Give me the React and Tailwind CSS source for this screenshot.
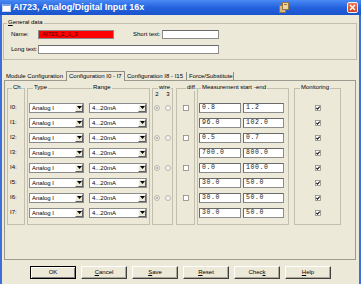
import React from "react";

const SANS = "font-['Liberation_Sans',Arial,sans-serif]";
const MONO = "font-['Liberation_Mono','Courier_New',monospace]";

const rows = [
  { ch: "I0:", s: "0.8", e: "1.2", pair: true },
  { ch: "I1:", s: "96.0", e: "102.0" },
  { ch: "I2:", s: "0.5", e: "0.7", pair: true },
  { ch: "I3:", s: "700.0", e: "800.0" },
  { ch: "I4:", s: "0.0", e: "100.0", pair: true },
  { ch: "I5:", s: "30.0", e: "50.0" },
  { ch: "I6:", s: "30.0", e: "50.0", pair: true },
  { ch: "I7:", s: "30.0", e: "50.0" },
];

function Group({ className, labels, children }) {
  return (
    <div className={`relative h-[137px] border border-[#c2bfae] ${className}`}>
      {labels.map(([t, pos]) => (
        <span
          key={t}
          className={`absolute top-[-5px] bg-[#ece9d8] px-[1px] text-[6px] leading-[7px] text-black ${pos}`}
        >
          {t}
        </span>
      ))}
      {children}
    </div>
  );
}

function Combo({ text, w }) {
  return (
    <div className={`flex h-[10px] items-stretch border border-[#8c8c8c] bg-white ${w}`}>
      <span className="flex-1 overflow-hidden pl-[2px] text-[6px] leading-[8px] whitespace-nowrap text-black">
        {text}
      </span>
      <span className="flex w-[8px] items-center justify-center border border-t-white border-l-white border-r-[#606060] border-b-[#606060] bg-[#ece9d8]">
        <svg width="5" height="3" viewBox="0 0 5 3">
          <path d="M0 0H5L2.5 3Z" fill="#000" />
        </svg>
      </span>
    </div>
  );
}

function Radio({ checked }) {
  return (
    <svg width="6" height="6" viewBox="0 0 6 6">
      <circle cx="3" cy="3" r="2.5" fill="#f4f3ee" stroke="#a8a8a0" strokeWidth="0.8" />
      {checked && <circle cx="3" cy="3" r="1.1" fill="#a8a8a0" />}
    </svg>
  );
}

function Check({ checked }) {
  return (
    <svg width="6" height="6" viewBox="0 0 6 6">
      <rect x="0.5" y="0.5" width="5" height="5" fill="#fff" stroke="#8a8a80" strokeWidth="0.8" />
      {checked && (
        <path d="M1.3 2.9L2.5 4.2L4.7 1.6" fill="none" stroke="#1a1a1a" strokeWidth="1.1" />
      )}
    </svg>
  );
}

function Field({ w, className = "", children }) {
  return (
    <div
      className={`h-[10px] border border-[#8c8c8c] border-t-[#6a6a6a] border-l-[#6a6a6a] bg-white pl-[2px] text-[6.5px] leading-[8px] tracking-[0.6px] text-[#222] ${MONO} ${w} ${className}`}
    >
      {children}
    </div>
  );
}

function Btn({ children, primary, className = "" }) {
  const base =
    "flex h-[13px] w-[46px] items-center justify-center bg-[#ece9d8] text-[6px] leading-[7px] text-black";
  const edge = primary
    ? "border border-black shadow-[inset_1px_1px_0_#fff,inset_-1px_-1px_0_#808080]"
    : "border border-t-white border-l-white border-r-[#404040] border-b-[#404040] shadow-[inset_-1px_-1px_0_#aca899]";
  return <div className={`${base} ${edge} ${className}`}>{children}</div>;
}

export default function App() {
  return (
    <div className={`h-[284px] w-[361px] overflow-hidden bg-[#ece9d8] ${SANS}`}>
      {/* Title bar */}
      <div className="flex h-[15px] items-center bg-gradient-to-b from-[#4a8af4] via-[#2462de] to-[#1a54cc] pl-[2px] pr-[3px]">
        <div className="h-[8px] w-[9px] border border-[#c8d4ec] border-t-[2px] border-t-[#7fa2e6] bg-white" />
        <span className="ml-[2px] text-[9px] font-bold leading-[15px] text-white">
          AI723, Analog/Digital Input 16x
        </span>
        <svg className="ml-auto" width="11" height="13" viewBox="0 0 11 13">
          <rect x="0.5" y="4.5" width="6" height="7" fill="#d9b77e" stroke="#9c7640" />
          <rect x="3.5" y="1.5" width="6" height="7" fill="#ecd3a2" stroke="#9c7640" />
          <rect x="5" y="3" width="3" height="1" fill="#9c7640" />
        </svg>
        <div className="ml-[57px] flex h-[11px] w-[11px] items-center justify-center rounded-[2px] border border-[#f2f2f2] bg-gradient-to-b from-[#ef7a57] to-[#d2401c]">
          <svg width="7" height="7" viewBox="0 0 7 7">
            <path d="M1 1L6 6M6 1L1 6" stroke="#fff" strokeWidth="1.4" />
          </svg>
        </div>
      </div>

      {/* Body */}
      <div className="flex h-[269px] flex-col border-l-[2px] border-r-[2px] border-[#3c6fdc]">
        {/* General data */}
        <div className="relative mt-[8px] ml-[1px] mr-[2px] border border-[#c2bfae] pt-[6px] pb-[5px] pl-[7px]">
          <span className="absolute top-[-5px] left-[3px] bg-[#ece9d8] px-[1px] text-[6px] leading-[7px] text-black">
            <span className="underline">G</span>eneral data
          </span>
          <div className="flex h-[9px] items-center">
            <span className="w-[27px] text-[6px] leading-[7px] text-black">Name:</span>
            <div className="flex h-[9px] w-[76px] items-center border border-[#8c8c8c] bg-[#ff0000] pl-[3px] text-[6px] leading-[7px] text-[#3a0000]">
              AI723_2_1_3
            </div>
            <span className="ml-[19px] w-[29px] text-[6px] leading-[7px] text-black">Short text:</span>
            <div className="h-[9px] w-[57px] border border-[#8c8c8c] border-t-[#6a6a6a] bg-white" />
          </div>
          <div className="mt-[6px] flex h-[9px] items-center">
            <span className="w-[27px] text-[6px] leading-[7px] text-black">Long text:</span>
            <div className="h-[9px] w-[181px] border border-[#8c8c8c] border-t-[#6a6a6a] bg-white" />
          </div>
        </div>

        {/* Tabs */}
        <div className="relative z-10 mt-[11px] ml-[2px] flex h-[9px] items-end text-[6px] leading-[8px] text-black">
          <div className="h-[8px] w-[61px] pl-[2px]">Module Configuration</div>
          <div className="ml-[1px] h-[10px] w-[59px] -mb-[1px] border border-b-0 border-[#8e8e84] bg-[#ece9d8] pl-[2px] leading-[9px]">
            Configuration I0 - I7
          </div>
          <div className="h-[8px] w-[62px] border-r border-[#8e8e84] pl-[2px]">Configuration I8 - I15</div>
          <div className="h-[8px] w-[47px] border-r border-[#8e8e84] pl-[2px]">Force/Substitute</div>
        </div>

        {/* Panel */}
        <div className="ml-[2px] mr-[3px] flex h-[180px] items-start border border-[#9a9a8e] pt-[7px]">
          {/* Ch. */}
          <Group className="ml-[2px] w-[18px] pt-[11px] pl-[2px]" labels={[["Ch.", "left-[4px]"]]}>
            {rows.map((r) => (
              <div key={r.ch} className="flex h-[15px] items-center text-[6px] leading-[7px] text-black">
                {r.ch}
              </div>
            ))}
          </Group>

          {/* Type / Range */}
          <Group
            className="ml-[2px] w-[123px] pt-[11px] pl-[1px]"
            labels={[
              ["Type", "left-[5px]"],
              ["Range", "left-[64px]"],
            ]}
          >
            {rows.map((r) => (
              <div key={r.ch} className="flex h-[15px] items-center gap-[5px]">
                <Combo text="Analog I" w="w-[55px]" />
                <Combo text="4...20mA" w="w-[58px]" />
              </div>
            ))}
          </Group>

          {/* wire */}
          <Group className="ml-[2px] w-[21px]" labels={[["wire", "left-[5px]"]]}>
            <div className="flex h-[11px] justify-center gap-[5px] pt-[2px] text-[6px] leading-[7px] text-black">
              <span className="w-[6px] text-center">2</span>
              <span className="w-[6px] text-center">3</span>
            </div>
            {rows.map((r) => (
              <div key={r.ch} className="flex h-[15px] items-center justify-center gap-[5px]">
                {r.pair && (
                  <>
                    <Radio checked />
                    <Radio />
                  </>
                )}
              </div>
            ))}
          </Group>

          {/* diff */}
          <Group className="ml-[3px] w-[19px] pt-[11px]" labels={[["diff.", "left-[9px]"]]}>
            {rows.map((r) => (
              <div key={r.ch} className="flex h-[15px] items-center justify-center">
                {r.pair && <Check />}
              </div>
            ))}
          </Group>

          {/* Measurement */}
          <Group
            className="ml-[2px] w-[92px] pt-[11px] pl-[1px]"
            labels={[
              ["Measurement start", "left-[3px]"],
              ["-end", "left-[55px]"],
            ]}
          >
            {rows.map((r) => (
              <div key={r.ch} className="flex h-[15px] items-center gap-[2px]">
                <Field w="w-[42px]">{r.s}</Field>
                <Field w="w-[41px]">{r.e}</Field>
              </div>
            ))}
          </Group>

          {/* Monitoring */}
          <Group className="ml-[5px] w-[47px] pt-[11px]" labels={[["Monitoring", "left-[5px]"]]}>
            {rows.map((r) => (
              <div key={r.ch} className="flex h-[15px] items-center justify-center">
                <Check checked />
              </div>
            ))}
          </Group>
        </div>

        {/* Buttons */}
        <div className="mt-[6px] flex gap-[5px] pl-[28px]">
          <Btn primary>OK</Btn>
          <Btn>
            <span className="underline">C</span>ancel
          </Btn>
          <Btn>
            <span className="underline">S</span>ave
          </Btn>
          <Btn>
            <span className="underline">R</span>eset
          </Btn>
          <Btn>
            Chec<span className="underline">k</span>
          </Btn>
          <Btn>
            <span className="underline">H</span>elp
          </Btn>
        </div>
      </div>
    </div>
  );
}
